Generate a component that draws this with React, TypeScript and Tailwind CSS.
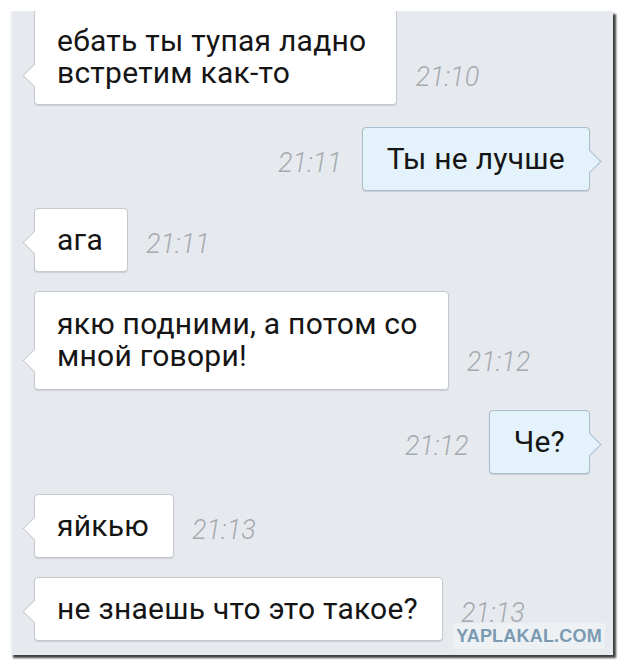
import React from "react";

const font = { fontFamily: "Roboto, 'Noto Sans', sans-serif" };

function Time({ t }: { t: string }) {
  return (
    <div className="text-[27px] leading-[28px] italic font-light text-[#a5aaaf] whitespace-nowrap">{t}</div>
  );
}

function LeftMsg({ lines, time, className = "", pr = "pr-[24px]", py = "py-[15px]" }: { lines: string[]; time: string; className?: string; pr?: string; py?: string }) {
  return (
    <div className={"flex items-end pl-[22px] " + className}>
      <div className={"relative bg-white border border-[#c4c9ce] rounded-[4px] shadow-[0_1px_1px_rgba(0,0,0,0.12)] pl-[22px] text-[30px] leading-[32px] tracking-[0.25px] text-[#151515] " + pr + " " + py}>
        <div className="absolute left-[-9px] bottom-[20px] w-[17px] h-[17px] bg-white border-l border-b border-[#c4c9ce] rotate-45" />
        <div className="relative">
          {lines.map((l, i) => (
            <div key={i} className="whitespace-nowrap">{l}</div>
          ))}
        </div>
      </div>
      <div className="ml-[18px] mb-[14px]">
        <Time t={time} />
      </div>
    </div>
  );
}

function RightMsg({ text, time, className = "" }: { text: string; time: string; className?: string }) {
  return (
    <div className={"flex items-end justify-end pr-[23px] " + className}>
      <div className="mr-[20px] mb-[14px]">
        <Time t={time} />
      </div>
      <div className="relative bg-[#e4f2fb] border border-[#a9bccb] rounded-[4px] shadow-[0_1px_1px_rgba(0,0,0,0.12)] px-[24px] py-[15px] text-[30px] leading-[32px] tracking-[0.25px] text-[#151515]">
        <div className="absolute right-[-9px] bottom-[20px] w-[17px] h-[17px] bg-[#e4f2fb] border-r border-t border-[#a9bccb] rotate-45" />
        <div className="relative whitespace-nowrap">{text}</div>
      </div>
    </div>
  );
}

export default function App() {
  return (
    <div className="w-[625px] h-[667px] bg-white pt-[11px] pl-[10px]" style={font}>
      <div className="relative w-[603px] h-[644px] bg-[#e6eaee] overflow-hidden border-l-2 border-[#f3f5f7] shadow-[3px_3px_2px_rgba(0,0,0,0.75)]">
        <div className="flex flex-col">
          <LeftMsg className="mt-[-2px]" pr="pr-[30px]" lines={["ебать ты тупая ладно", "встретим как-то"]} time="21:10" />
          <RightMsg className="mt-[22px]" text="Ты не лучше" time="21:11" />
          <LeftMsg className="mt-[17px]" lines={["ага"]} time="21:11" />
          <LeftMsg className="mt-[19px]" pr="pr-[30px]" py="pt-[16px] pb-[17px]" lines={["якю подними, а потом со", "мной говори!"]} time="21:12" />
          <RightMsg className="mt-[20px]" text="Че?" time="21:12" />
          <LeftMsg className="mt-[20px]" lines={["яйкью"]} time="21:13" />
          <LeftMsg className="mt-[19px]" lines={["не знаешь что это такое?"]} time="21:13" />
        </div>
        <div className="absolute right-[8px] bottom-[6px] w-[152px] h-[26px] bg-[#eef1f4] flex items-center justify-center text-[18px] font-black tracking-[0.2px] text-[#7b9bb3]" style={{ fontFamily: "'Liberation Sans', sans-serif" }}>
          YAPLAKAL.COM
        </div>
      </div>
    </div>
  );
}
